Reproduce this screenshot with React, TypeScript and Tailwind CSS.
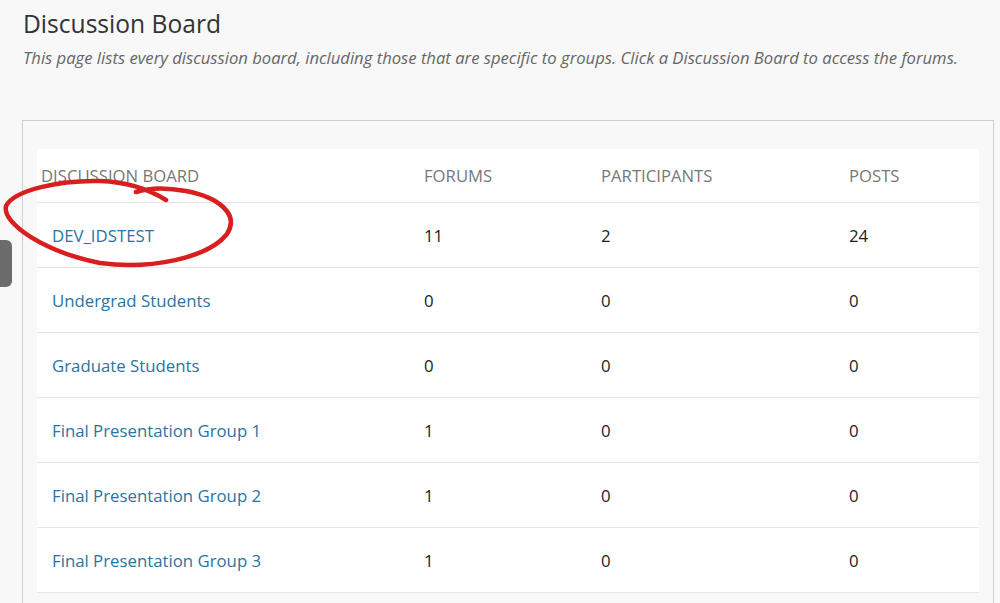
const rows = [
  { name: "DEV_IDSTEST", forums: 11, participants: 2, posts: 24 },
  { name: "Undergrad Students", forums: 0, participants: 0, posts: 0 },
  { name: "Graduate Students", forums: 0, participants: 0, posts: 0 },
  { name: "Final Presentation Group 1", forums: 1, participants: 0, posts: 0 },
  { name: "Final Presentation Group 2", forums: 1, participants: 0, posts: 0 },
  { name: "Final Presentation Group 3", forums: 1, participants: 0, posts: 0 },
];

export default function App() {
  return (
    <div className="relative h-[603px] w-[1000px] overflow-hidden bg-[#f8f8f8] font-['Open_Sans',sans-serif]">
      {/* side tab */}
      <div className="absolute left-0 top-[240px] h-[47px] w-[12px] rounded-r-[6px] bg-[#6b6b6b]" />

      <div className="pl-[23px] pt-[6px]">
        <h1 className="text-[24.6px] leading-[36px] text-[#333]">Discussion Board</h1>
        <p className="mt-[4px] text-[16.65px] italic leading-[24px] text-[#666]">
          This page lists every discussion board, including those that are specific to groups. Click a Discussion Board to access the forums.
        </p>
      </div>

      <div className="ml-[22px] mt-[50px] h-[600px] w-[972px] border border-[#cfcfcf] px-[14px] pt-[28px]">
        <div className="bg-white">
          <div className="grid h-[54px] grid-cols-[387px_177px_248px_1fr] items-center border-b border-[#e6e6e6] text-[16.7px] uppercase text-[#777]">
            <div className="pl-[4px]">Discussion Board</div>
            <div>Forums</div>
            <div>Participants</div>
            <div>Posts</div>
          </div>
          {rows.map((r) => (
            <div
              key={r.name}
              className="grid h-[65px] grid-cols-[387px_177px_248px_1fr] items-center border-b border-[#e6e6e6] text-[16.8px] text-[#222]"
            >
              <div className="pl-[15px] pt-[2px] text-[#2a74a0]">{r.name}</div>
              <div className="pt-[2px]">{r.forums}</div>
              <div className="pt-[2px]">{r.participants}</div>
              <div className="pt-[2px]">{r.posts}</div>
            </div>
          ))}
        </div>
      </div>

      {/* red annotation */}
      <svg className="pointer-events-none absolute left-0 top-0" width="260" height="290" viewBox="0 0 260 290">
        <path
          d="M166 200 C150 190, 130 182, 100 181 C60 180, 14 190, 6 206 C2 224, 45 252, 100 263 C150 270, 208 258, 227 234 C240 214, 218 197, 186 191 C165 187, 148 188, 136 192"
          fill="none"
          stroke="#d81e1e"
          strokeWidth="4.5"
          strokeLinecap="round"
        />
      </svg>
    </div>
  );
}
